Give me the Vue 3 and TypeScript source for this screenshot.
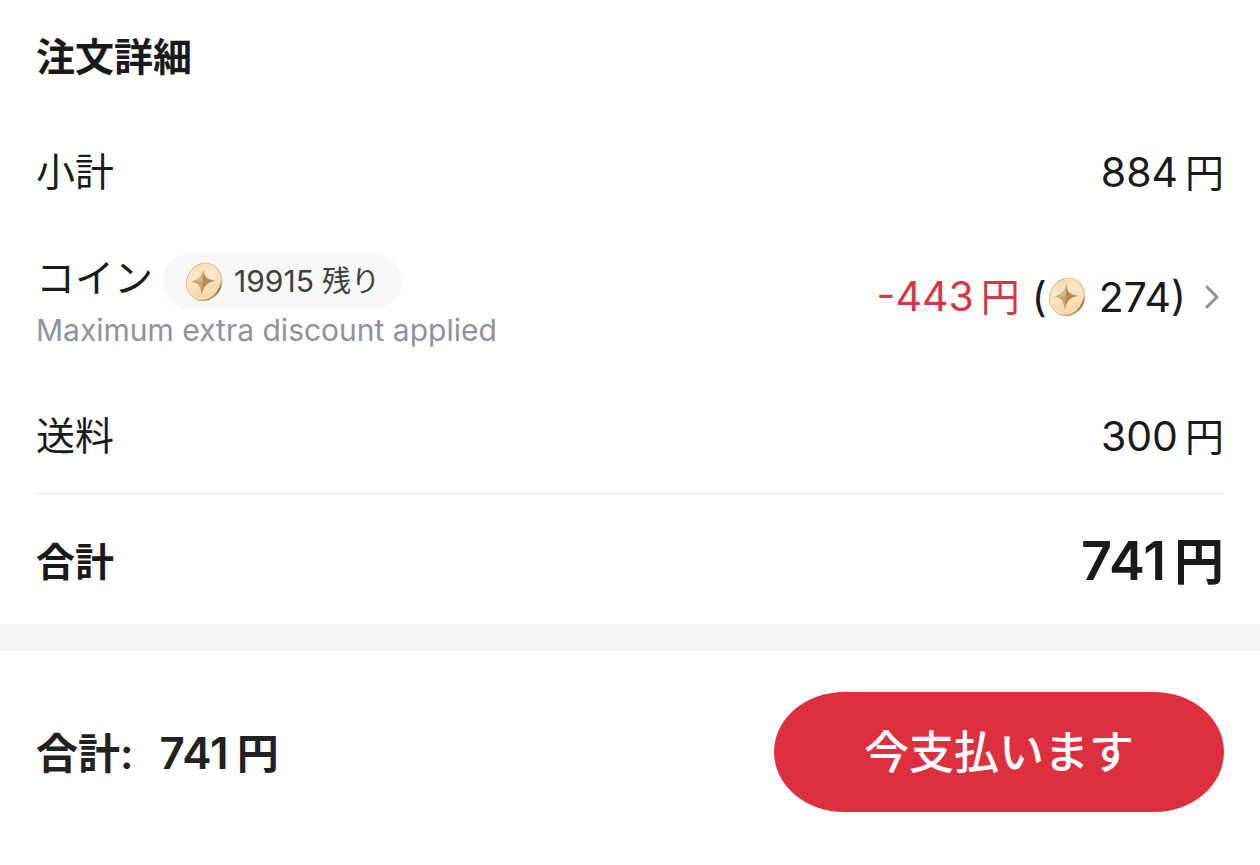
<script setup lang="ts">
import { ref } from 'vue'

const subtotal = 884
const shipping = 300
const discount = 443
const coinsUsed = 274
const coinsLeft = ref(19915)
const total = subtotal - discount + shipping
</script>

<template>
  <main class="page">
    <svg class="defs" aria-hidden="true">
      <defs>
        <linearGradient id="coinFace" x1="0" y1="0" x2="1" y2="1">
          <stop offset="0" stop-color="#efd5ab" />
          <stop offset="0.35" stop-color="#fae8c9" />
          <stop offset="0.65" stop-color="#f7dfb4" />
          <stop offset="1" stop-color="#efcf9e" />
        </linearGradient>
        <linearGradient id="coinEdge" x1="0.3" y1="0" x2="0.8" y2="1">
          <stop offset="0" stop-color="#d8b484" />
          <stop offset="0.4" stop-color="#eed3a8" />
          <stop offset="0.65" stop-color="#a06c48" />
          <stop offset="0.85" stop-color="#c4946a" />
          <stop offset="1" stop-color="#e0bc8c" />
        </linearGradient>
        <symbol id="coin" viewBox="0 0 40 40">
          <ellipse cx="21" cy="20.6" rx="16.8" ry="19.2" transform="rotate(28 21 20.6)" fill="url(#coinEdge)" />
          <ellipse cx="19.4" cy="19.4" rx="16.8" ry="19.2" transform="rotate(28 19.4 19.4)" fill="#d9b27e" />
          <ellipse cx="19.6" cy="19.6" rx="16.1" ry="18.5" transform="rotate(28 19.6 19.6)" fill="#fdecca" />
          <ellipse cx="19.5" cy="19.5" rx="15.4" ry="17.800" transform="rotate(28 19.5 19.5)" fill="url(#coinFace)" />
          <path d="M19.500 7.500 C20 14.500 22 17.600 31 18.800 C23 20.400 20.600 22.500 17.500 32 C16.500 24 14.500 21 7.500 19.500 C14.500 17.600 17.500 15 19.500 7.500Z" fill="#cda36c" />
          <path d="M19.500 7.500 L18.800 19.300 L7.500 19.500 C14.500 17.600 17.500 15 19.500 7.500Z" fill="#d8b27c" />
          <path d="M19.500 7.500 C20 14.500 22 17.600 31 18.800 L18.800 19.300Z" fill="#b58a58" />
          <path d="M31 18.800 L18.800 19.300 L17.500 32 C20.600 22.500 23 20.400 31 18.800Z" fill="#b08858" />
        </symbol>
      </defs>
    </svg>

    <section class="details">
      <h1 class="title">注文詳細</h1>
      <dl class="rows">
        <div class="row">
          <dt>小計</dt>
          <dd class="amount">{{ subtotal }}<span class="unit">円</span></dd>
        </div>
        <div class="row coins">
          <dt>
            <span class="coin-head">
              コイン
              <span class="pill">
                <svg class="coin" aria-hidden="true"><use href="#coin" /></svg>
                <span>{{ coinsLeft }}<span class="unit">残り</span></span>
              </span>
            </span>
            <span class="note">Maximum extra discount applied</span>
          </dt>
          <dd>
            <button type="button" class="coin-button amount">
              <span class="discount">-{{ discount }}<span class="unit">円</span></span>
              <span class="used">(<svg class="coin" aria-hidden="true"><use href="#coin" /></svg><span class="count">{{ coinsUsed }})</span></span>
              <svg class="chevron" viewBox="0 0 16 26" aria-hidden="true">
                <path d="M3 3 L13 13 L3 23" />
              </svg>
            </button>
          </dd>
        </div>
        <div class="row shipping">
          <dt>送料</dt>
          <dd class="amount">{{ shipping }}<span class="unit">円</span></dd>
        </div>
        <div class="row total">
          <dt>合計</dt>
          <dd>{{ total }}<span class="unit">円</span></dd>
        </div>
      </dl>
    </section>

    <footer class="footer">
      <p class="sum"><span class="sum-label">合計:</span><span>{{ total }}<span class="unit">円</span></span></p>
      <button type="button" class="pay">今支払います</button>
    </footer>
  </main>
</template>

<style>
body {
  margin: 0;
  background: #fff;
}
</style>

<style scoped>
.page {
  font-family: Inter, "Noto Sans CJK JP", sans-serif;
  color: #1a1a1a;
}
.defs {
  position: absolute;
  width: 0;
  height: 0;
}
.details {
  padding: 0 36px;
  border-bottom: 27px solid #f4f4f4;
}
.title {
  margin: 0;
  font-size: 39px;
  line-height: 114px;
  font-weight: 700;
}
.rows,
.rows dd,
.sum {
  margin: 0;
}
.row {
  display: flex;
  align-items: center;
  justify-content: space-between;
  min-height: 116px;
  font-size: 39px;
  line-height: 56px;
}
.amount {
  font-size: 41px;
}
.unit {
  margin-left: 8px;
}
.amount .unit {
  margin-left: 7px;
  font-size: 39px;
}
.coins {
  padding: 23px 0 30px;
  min-height: 0;
}
.coin-head {
  display: flex;
  align-items: flex-start;
  gap: 9px;
  line-height: 50px;
}
.pill {
  display: flex;
  align-items: center;
  gap: 10px;
  padding: 0 22px;
  border-radius: 29px;
  background: #f7f7f7;
  color: #404040;
  font-size: 30px;
  line-height: 57px;
}
.pill .unit {
  font-size: 29px;
}
.coin {
  width: 40px;
  height: 40px;
  flex: none;
}
.note {
  display: block;
  color: #9090a0;
  font-size: 30px;
  line-height: 40px;
}
.coin-button {
  display: flex;
  align-items: center;
  gap: 12px;
  padding: 0 4px 10px 0;
  border: 0;
  background: none;
  color: inherit;
  font-family: inherit;
  line-height: 56px;
  cursor: pointer;
}
.discount {
  color: #d63646;
}
.used {
  display: flex;
  align-items: center;
}
.count {
  padding: 0 6px 0 12px;
}
.chevron {
  width: 16px;
  height: 26px;
  fill: none;
  stroke: #9090a0;
  stroke-width: 3;
  stroke-linecap: round;
  stroke-linejoin: round;
}
.shipping {
  min-height: 112px;
}
.total {
  min-height: 125px;
  padding-top: 4px;
  border-top: 3px solid #f4f4f4;
  font-weight: 700;
}
.total dd {
  font-size: 54px;
  font-weight: 600;
}
.total .unit {
  font-size: 50px;
}
.footer {
  display: flex;
  align-items: center;
  justify-content: space-between;
  padding: 41px 36px 53px;
}
.sum {
  display: flex;
  align-items: center;
  gap: 26px;
  padding-bottom: 4px;
  font-size: 44px;
  font-weight: 600;
  color: #222;
}
.sum-label,
.sum .unit {
  font-size: 42px;
}
.pay {
  width: 450px;
  height: 120px;
  padding: 0 0 5px;
  border: 0;
  border-radius: 70px / 60px;
  background: #dd303e;
  color: #fff;
  font-family: inherit;
  font-size: 45px;
  font-weight: 500;
  cursor: pointer;
}
</style>
